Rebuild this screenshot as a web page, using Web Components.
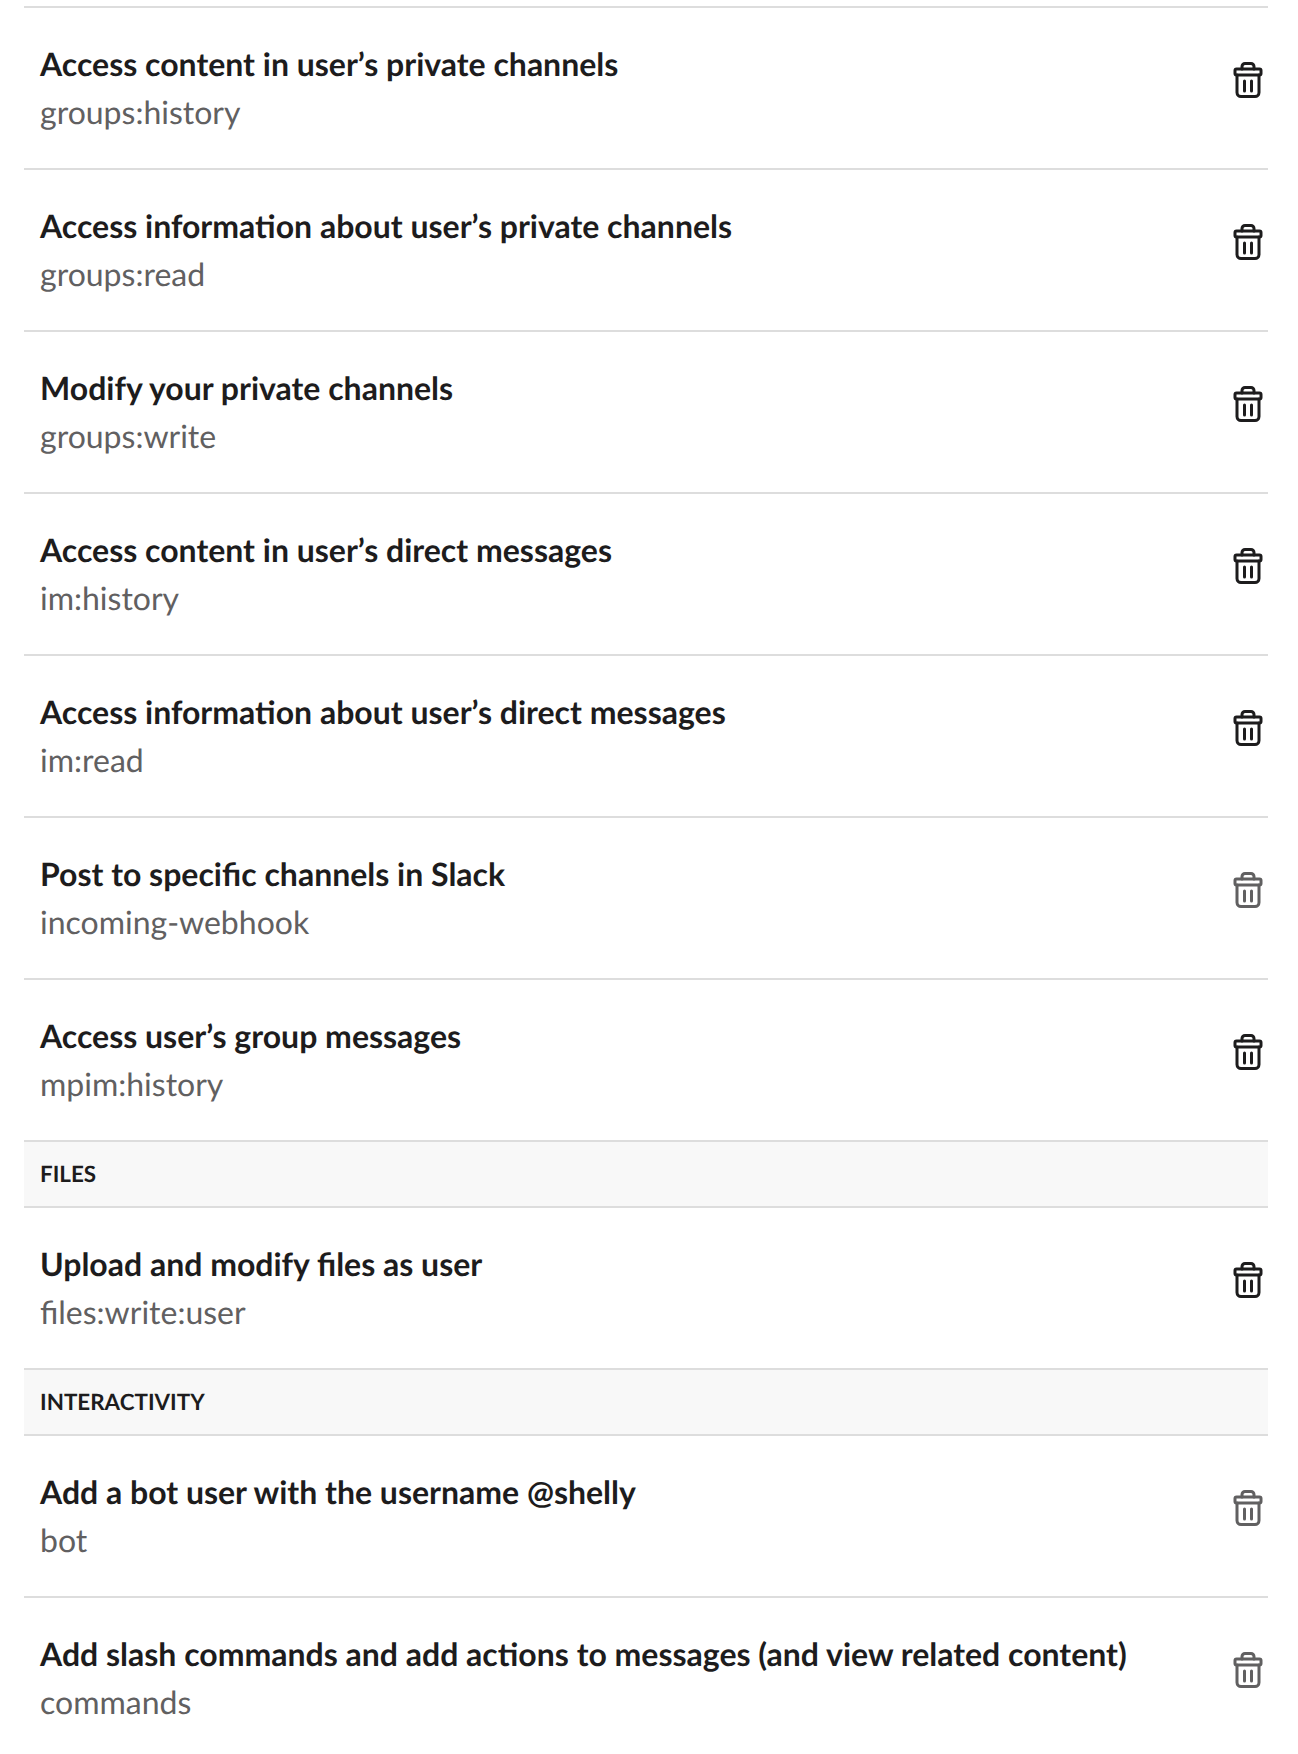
<!DOCTYPE html>
<html><head><meta charset="utf-8">
<style>html,body{margin:0;background:#fff}body{font-family:Lato,"Liberation Sans",sans-serif;color:#1d1c1d;text-rendering:geometricPrecision}</style>
</head><body>
<template id="t-list"><style>:host{display:block;margin:6px 30px 0 24px;border-top:2px solid #ddd}</style><slot></slot></template>
<template id="t-row"><style>
:host{display:flex;align-items:center;justify-content:space-between;box-sizing:border-box;height:162px;padding:0 2px 0 16px;border-bottom:2px solid #ddd}
.t{font-size:32px;font-weight:700;line-height:48px;color:#1d1c1d}
.s{font-size:32px;font-weight:400;line-height:48px;color:#616061}
svg{display:block;width:36px;height:40px;flex:none;margin-bottom:16px;color:var(--c,#1d1c1d)}
:host([muted]){--c:#616061}
</style><div><div class="t"><slot></slot></div><div class="s"><slot name="s"></slot></div></div>
<svg viewBox="0 0 36 40" fill="none" stroke="currentColor" stroke-width="3" stroke-linejoin="round" stroke-linecap="round"><path d="M12 9V6.5A3 3 0 0 1 15 3.5H21A3 3 0 0 1 24 6.5V9"/><rect x="5" y="9" width="26" height="6" rx="1.5"/><path d="M7 15V32.5A4 4 0 0 0 11 36.500H25A4 4 0 0 0 29 32.500V15"/><path d="M14.500 21V31M21.500 21V31"/></svg></template>
<template id="t-head"><style>:host{display:flex;align-items:center;box-sizing:border-box;height:66px;padding:0 16px 2px;background:#f8f8f8;border-bottom:2px solid #ddd;font-size:22.4px;font-weight:700;color:#1d1c1d;text-transform:uppercase}</style><slot></slot></template>
<scope-list>
<scope-row>Access content in user’s private channels<span slot="s">groups:history</span></scope-row>
<scope-row>Access information about user’s private channels<span slot="s">groups:read</span></scope-row>
<scope-row>Modify your private channels<span slot="s">groups:write</span></scope-row>
<scope-row>Access content in user’s direct messages<span slot="s">im:history</span></scope-row>
<scope-row>Access information about user’s direct messages<span slot="s">im:read</span></scope-row>
<scope-row muted>Post to specific channels in Slack<span slot="s">incoming-webhook</span></scope-row>
<scope-row>Access user’s group messages<span slot="s">mpim:history</span></scope-row>
<scope-head>Files</scope-head>
<scope-row>Upload and modify files as user<span slot="s">files:write:user</span></scope-row>
<scope-head>Interactivity</scope-head>
<scope-row muted>Add a bot user with the username @shelly<span slot="s">bot</span></scope-row>
<scope-row muted>Add slash commands and add actions to messages (and view related content)<span slot="s">commands</span></scope-row>
</scope-list>
<script>
for(const [n,t] of [['scope-list','t-list'],['scope-row','t-row'],['scope-head','t-head']]){
customElements.define(n,class extends HTMLElement{constructor(){super();this.attachShadow({mode:'open'}).appendChild(document.getElementById(t).content.cloneNode(true))}})}
</script>
</body></html>
